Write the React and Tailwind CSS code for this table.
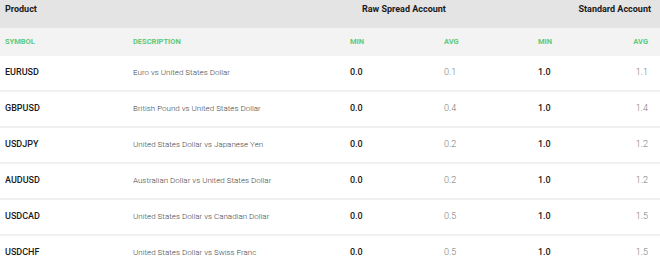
const rows = [
  { sym: 'EURUSD', desc: 'Euro vs United States Dollar', rawMin: '0.0', rawAvg: '0.1', stdMin: '1.0', stdAvg: '1.1' },
  { sym: 'GBPUSD', desc: 'British Pound vs United States Dollar', rawMin: '0.0', rawAvg: '0.4', stdMin: '1.0', stdAvg: '1.4' },
  { sym: 'USDJPY', desc: 'United States Dollar vs Japanese Yen', rawMin: '0.0', rawAvg: '0.2', stdMin: '1.0', stdAvg: '1.2' },
  { sym: 'AUDUSD', desc: 'Australian Dollar vs United States Dollar', rawMin: '0.0', rawAvg: '0.2', stdMin: '1.0', stdAvg: '1.2' },
  { sym: 'USDCAD', desc: 'United States Dollar vs Canadian Dollar', rawMin: '0.0', rawAvg: '0.5', stdMin: '1.0', stdAvg: '1.5' },
  { sym: 'USDCHF', desc: 'United States Dollar vs Swiss Franc', rawMin: '0.0', rawAvg: '0.5', stdMin: '1.0', stdAvg: '1.5' },
];

const cols = 'grid grid-cols-[128px_217px_94px_94px_1fr] items-center pl-[5px] pr-[12px]';

export default function App() {
  return (
    <div className="w-[660px] h-[265px] overflow-hidden bg-white font-['Roboto',sans-serif]">
      {/* top header */}
      <div className="h-[28px] bg-[#e3e4e3] flex items-start pt-[3px] pl-[5px] pr-[9px] text-[9px] font-bold text-[#1a1a1a]">
        <span className="w-[357px]">Product</span>
        <span>Raw Spread Account</span>
        <span className="ml-auto">Standard Account</span>
      </div>

      {/* column labels */}
      <div className={`${cols} h-[28px] bg-[#f3f3f3] text-[7.5px] font-bold text-[#5cc97a]`}>
        <span>SYMBOL</span>
        <span>DESCRIPTION</span>
        <span>MIN</span>
        <span>AVG</span>
        <div className="flex justify-between">
          <span>MIN</span>
          <span>AVG</span>
        </div>
      </div>

      {rows.map((r) => (
        <div key={r.sym} className={`${cols} h-[36px] border-b-2 border-[#f0f0f0]`}>
          <span className="text-[9px] font-medium text-[#1a1a1a]">{r.sym}</span>
          <span className="text-[8px] font-light text-[#444]">{r.desc}</span>
          <span className="text-[9px] font-medium text-[#1a1a1a]">{r.rawMin}</span>
          <span className="text-[9px] font-light text-[#777]">{r.rawAvg}</span>
          <div className="flex justify-between">
            <span className="text-[9px] font-medium text-[#1a1a1a]">{r.stdMin}</span>
            <span className="text-[9px] font-light text-[#777]">{r.stdAvg}</span>
          </div>
        </div>
      ))}
    </div>
  );
}
